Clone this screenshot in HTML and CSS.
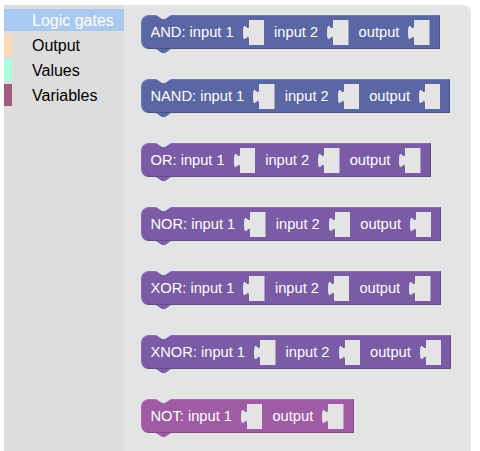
FILE: index.html
```html
<!DOCTYPE html>
<html>
<head>
<meta charset="utf-8">
<link rel="stylesheet" href="styles.css">
</head>
<body>
<div class="workspace">
  <div class="toolbox">
    <div class="row selected"><span class="row-label">Logic gates</span></div>
    <div class="row cat-output"><span class="row-label">Output</span></div>
    <div class="row cat-values"><span class="row-label">Values</span></div>
    <div class="row cat-variables"><span class="row-label">Variables</span></div>
  </div>
  <div class="flyout">
    <div class="block block-and">
      <span class="label">AND: input 1</span>
      <svg class="socket" viewBox="0 0 21.5 25"><path d="M21.5,0 H6 V5 c0,10 -6,-8 -6,7.5 s6,-2.5 6,7.5 V25 H21.5 Z"/></svg>
      <span class="label">input 2</span>
      <svg class="socket" viewBox="0 0 21.5 25"><path d="M21.5,0 H6 V5 c0,10 -6,-8 -6,7.5 s6,-2.5 6,7.5 V25 H21.5 Z"/></svg>
      <span class="label">output</span>
      <svg class="socket" viewBox="0 0 21.5 25"><path d="M21.5,0 H6 V5 c0,10 -6,-8 -6,7.5 s6,-2.5 6,7.5 V25 H21.5 Z"/></svg>
    </div>
    <div class="block block-and">
      <span class="label">NAND: input 1</span>
      <svg class="socket" viewBox="0 0 21.5 25"><path d="M21.5,0 H6 V5 c0,10 -6,-8 -6,7.5 s6,-2.5 6,7.5 V25 H21.5 Z"/></svg>
      <span class="label">input 2</span>
      <svg class="socket" viewBox="0 0 21.5 25"><path d="M21.5,0 H6 V5 c0,10 -6,-8 -6,7.5 s6,-2.5 6,7.5 V25 H21.5 Z"/></svg>
      <span class="label">output</span>
      <svg class="socket" viewBox="0 0 21.5 25"><path d="M21.5,0 H6 V5 c0,10 -6,-8 -6,7.5 s6,-2.5 6,7.5 V25 H21.5 Z"/></svg>
    </div>
    <div class="block block-or">
      <span class="label">OR: input 1</span>
      <svg class="socket" viewBox="0 0 21.5 25"><path d="M21.5,0 H6 V5 c0,10 -6,-8 -6,7.5 s6,-2.5 6,7.5 V25 H21.5 Z"/></svg>
      <span class="label">input 2</span>
      <svg class="socket" viewBox="0 0 21.5 25"><path d="M21.5,0 H6 V5 c0,10 -6,-8 -6,7.5 s6,-2.5 6,7.5 V25 H21.5 Z"/></svg>
      <span class="label">output</span>
      <svg class="socket" viewBox="0 0 21.5 25"><path d="M21.5,0 H6 V5 c0,10 -6,-8 -6,7.5 s6,-2.5 6,7.5 V25 H21.5 Z"/></svg>
    </div>
    <div class="block block-or">
      <span class="label">NOR: input 1</span>
      <svg class="socket" viewBox="0 0 21.5 25"><path d="M21.5,0 H6 V5 c0,10 -6,-8 -6,7.5 s6,-2.5 6,7.5 V25 H21.5 Z"/></svg>
      <span class="label">input 2</span>
      <svg class="socket" viewBox="0 0 21.5 25"><path d="M21.5,0 H6 V5 c0,10 -6,-8 -6,7.5 s6,-2.5 6,7.5 V25 H21.5 Z"/></svg>
      <span class="label">output</span>
      <svg class="socket" viewBox="0 0 21.5 25"><path d="M21.5,0 H6 V5 c0,10 -6,-8 -6,7.5 s6,-2.5 6,7.5 V25 H21.5 Z"/></svg>
    </div>
    <div class="block block-or">
      <span class="label">XOR: input 1</span>
      <svg class="socket" viewBox="0 0 21.5 25"><path d="M21.5,0 H6 V5 c0,10 -6,-8 -6,7.5 s6,-2.5 6,7.5 V25 H21.5 Z"/></svg>
      <span class="label">input 2</span>
      <svg class="socket" viewBox="0 0 21.5 25"><path d="M21.5,0 H6 V5 c0,10 -6,-8 -6,7.5 s6,-2.5 6,7.5 V25 H21.5 Z"/></svg>
      <span class="label">output</span>
      <svg class="socket" viewBox="0 0 21.5 25"><path d="M21.5,0 H6 V5 c0,10 -6,-8 -6,7.5 s6,-2.5 6,7.5 V25 H21.5 Z"/></svg>
    </div>
    <div class="block block-or">
      <span class="label">XNOR: input 1</span>
      <svg class="socket" viewBox="0 0 21.5 25"><path d="M21.5,0 H6 V5 c0,10 -6,-8 -6,7.5 s6,-2.5 6,7.5 V25 H21.5 Z"/></svg>
      <span class="label">input 2</span>
      <svg class="socket" viewBox="0 0 21.5 25"><path d="M21.5,0 H6 V5 c0,10 -6,-8 -6,7.5 s6,-2.5 6,7.5 V25 H21.5 Z"/></svg>
      <span class="label">output</span>
      <svg class="socket" viewBox="0 0 21.5 25"><path d="M21.5,0 H6 V5 c0,10 -6,-8 -6,7.5 s6,-2.5 6,7.5 V25 H21.5 Z"/></svg>
    </div>
    <div class="block block-not">
      <span class="label">NOT: input 1</span>
      <svg class="socket" viewBox="0 0 21.5 25"><path d="M21.5,0 H6 V5 c0,10 -6,-8 -6,7.5 s6,-2.5 6,7.5 V25 H21.5 Z"/></svg>
      <span class="label">output</span>
      <svg class="socket" viewBox="0 0 21.5 25"><path d="M21.5,0 H6 V5 c0,10 -6,-8 -6,7.5 s6,-2.5 6,7.5 V25 H21.5 Z"/></svg>
    </div>
  </div>
</div>
</body>
</html>
```
FILE: styles.css
```css
html, body {
  margin: 0;
  padding: 0;
  background: #ffffff;
  overflow: hidden;
}

.workspace {
  display: flex;
  align-items: stretch;
  height: 100vh;
  padding: 5px 0 0 4px;
  box-sizing: border-box;
  font-family: "Liberation Sans", Arial, sans-serif;
}

.toolbox {
  width: 120px;
  flex: none;
  background: #dddddd;
  padding-top: 4px;
  box-sizing: border-box;
}

.row {
  height: 22px;
  line-height: 23px;
  margin-bottom: 3px;
  border-left: 8px solid transparent;
  font-size: 16px;
  color: #000000;
  white-space: nowrap;
}

.row-label {
  padding-left: 20px;
}

.row.selected {
  background: #a9c9f0;
  border-left-color: #a9c9f0;
  color: #ffffff;
}

.cat-output { border-left-color: #ffdab9; }
.cat-values { border-left-color: #aaffdc; }
.cat-variables { border-left-color: #a55b80; }

.flyout {
  width: 347px;
  flex: none;
  background: #e4e4e4;
  border-radius: 0 8px 0 0;
  padding: 10px 0 0 17px;
  box-sizing: border-box;
  display: flex;
  flex-direction: column;
  align-items: flex-start;
  gap: 30px;
}

.block {
  position: relative;
  display: flex;
  align-items: center;
  height: 34px;
  padding-left: 9.5px;
  border-radius: 8px 0 0 8px;
  color: #ffffff;
  font-size: 14.67px;
  white-space: nowrap;
  box-shadow: inset -1px -1px 0 rgba(0, 0, 0, 0.18), inset 1px 1px 0 rgba(255, 255, 255, 0.12);
}

.block::before {
  content: "";
  position: absolute;
  top: 0;
  left: 15px;
  width: 15px;
  height: 4px;
  background: #e4e4e4;
  clip-path: polygon(0 0, 100% 0, 9px 100%, 6px 100%);
}

.block::after {
  content: "";
  position: absolute;
  bottom: -4px;
  left: 15px;
  width: 15px;
  height: 4px;
  background: inherit;
  clip-path: polygon(0 0, 100% 0, 9px 100%, 6px 100%);
}

.block-and { background: #5b67a5; }
.block-or { background: #7a5ba5; }
.block-not { background: #a05ba5; }

.label {
  line-height: 34px;
}

.socket {
  width: 21.5px;
  height: 25px;
  margin: 0 10px 0 9px;
  flex: none;
}

.socket path {
  fill: #e4e4e4;
}
```
